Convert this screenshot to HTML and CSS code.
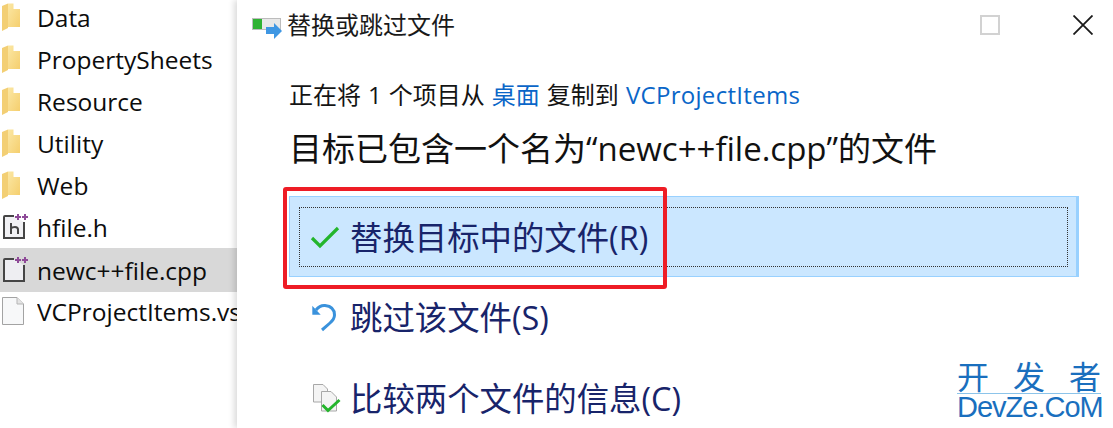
FILE: index.html
```html
<!DOCTYPE html>
<html lang="zh-CN">
<head>
<meta charset="utf-8">
<title>替换或跳过文件</title>
<link rel="stylesheet" href="styles.css">
</head>
<body>
<div class="screen">
  <aside class="files">
    <div class="file"><svg class="ico" viewBox="0 0 30 28"><use href="#folder"/></svg><span>Data</span></div>
    <div class="file"><svg class="ico" viewBox="0 0 30 28"><use href="#folder"/></svg><span>PropertySheets</span></div>
    <div class="file"><svg class="ico" viewBox="0 0 30 28"><use href="#folder"/></svg><span>Resource</span></div>
    <div class="file"><svg class="ico" viewBox="0 0 30 28"><use href="#folder"/></svg><span>Utility</span></div>
    <div class="file"><svg class="ico" viewBox="0 0 30 28"><use href="#folder"/></svg><span>Web</span></div>
    <div class="file"><svg class="ico" viewBox="0 0 30 28">
      <path d="M12 3H3Q2 3 2 4V25H22V9" fill="#f1f1f4" stroke="#454545" stroke-width="2"/>
      <path d="M9 10V21M9 15.500Q10 14 13 14Q16 14 16 16.500V21" fill="none" stroke="#454545" stroke-width="2"/>
      <path d="M13 4H19M16 1V7M20 4H26M23 1V7" stroke="#8e4a98" stroke-width="2"/>
    </svg><span>hfile.h</span></div>
    <div class="file selected"><svg class="ico" viewBox="0 0 30 28">
      <path d="M12 3H3Q2 3 2 4V25H22V9" fill="#eeeef2" stroke="#454545" stroke-width="2"/>
      <path d="M13 4H19M16 1V7M20 4H26M23 1V7" stroke="#8e4a98" stroke-width="2"/>
    </svg><span>newc++file.cpp</span></div>
    <div class="file"><svg class="ico" viewBox="0 0 30 28">
      <path d="M0.500 0.500H15L21.500 7V27.500H0.500Z" fill="#f7f8f9" stroke="#a3a3a3"/>
      <path d="M15 0.500V7H21.500" fill="#e4e4e4" stroke="#b5b5b5"/>
    </svg><span class="clip">VCProjectItems.vs</span></div>
  </aside>

  <main class="dialog">
    <header class="titlebar">
      <svg class="app-ico" viewBox="0 0 32 22">
        <rect x="0.500" y="0.500" width="28" height="11" fill="#e8e8e8" stroke="#bcbcbc"/>
        <rect x="1" y="1" width="9" height="10" fill="#2fb233"/>
        <path d="M14 9H22V5L30 13L22 21V16H14Z" fill="#3f97e3"/>
      </svg>
      <h1 class="title">替换或跳过文件</h1>
      <div class="winctl">
        <span class="maxbtn"></span>
        <svg class="closebtn" viewBox="0 0 20 20"><path d="M0.500 0.500L19.500 19.500M19.500 0.500L0.500 19.500" stroke="#1a1a1a" stroke-width="1.800"/></svg>
      </div>
    </header>

    <p class="status">正在将 1 个项目从 <a>桌面</a> 复制到 <a class="wide">VCProjectItems</a></p>
    <h2 class="heading">目标已包含一个名为“newc++file.cpp”的文件</h2>

    <div class="option active">
      <div class="focus">
        <svg class="opt-ico" viewBox="0 0 30 24"><path d="M2 13L10 21L28 3" fill="none" stroke="#24b52c" stroke-width="3.200"/></svg>
        <span class="opt-text">替换目标中的文件(R)</span>
      </div>
    </div>
    <div class="option">
      <div class="plain">
        <svg class="opt-ico" viewBox="0 0 30 30"><path d="M6 7Q10 2 15 2.500Q24.500 3.500 24.500 12Q24.500 16 20 20L12 27" fill="none" stroke="#3a92dc" stroke-width="3"/><path d="M2.300 2.700V11.700H10.700Z" fill="#3a92dc"/></svg>
        <span class="opt-text">跳过该文件(S)</span>
      </div>
    </div>
    <div class="option">
      <div class="plain">
        <svg class="opt-ico" viewBox="0 0 30 30">
          <path d="M3.500 0.500H13L17.500 5V18H3.500Z" fill="#f4f4f4" stroke="#a8a8a8"/>
          <path d="M11.500 7.500H21L26.500 13V27H11.500Z" fill="#f4f4f4" stroke="#a8a8a8"/>
          <path d="M12.500 21L18 26.500L29.500 16" fill="none" stroke="#24b52c" stroke-width="3"/>
        </svg>
        <span class="opt-text">比较两个文件的信息(C)</span>
      </div>
    </div>
  </main>

  <div class="redbox"></div>
  <div class="mark">
    <div class="mark-top"><span>开</span><span>发</span><span>者</span></div>
    <div class="mark-bottom">DevZe.CoM</div>
  </div>
</div>

<svg class="defs" aria-hidden="true"><defs>
  <linearGradient id="fg" x1="0" y1="0" x2="1" y2="1"><stop offset="0" stop-color="#fbe7a4"/><stop offset="1" stop-color="#f5cf6e"/></linearGradient>
  <symbol id="folder" viewBox="0 0 30 28">
    <path d="M0 3L6 0.500V25L0 28Z" fill="#f3cf74"/>
    <path d="M6 0.500H11.500V6H18V24H6Z" fill="url(#fg)"/>
  </symbol>
</defs></svg>
</body>
</html>
```
FILE: styles.css
```css
* { box-sizing: border-box; }
html, body { margin: 0; height: 100%; overflow: hidden; background: #fff; }
body { font-family: "Open Sans", "Noto Sans CJK SC", sans-serif; color: #111; }
.defs { width: 0; height: 0; position: absolute; }

.screen { position: relative; display: flex; width: 1113px; height: 428px; overflow: hidden; }

.files { flex: 0 0 237px; width: 237px; margin-top: -4px; overflow: hidden; }
.file { display: flex; align-items: center; height: 42px; padding-left: 2px; font-size: 24.500px; white-space: nowrap; color: #0c0c0c; }
.file.selected { height: 44px; margin-bottom: -2px; background: #d8d8d8; }
.ico { flex: none; width: 30px; height: 28px; margin-right: 5px; }
.clip { overflow: hidden; }

.dialog { position: relative; flex: 1; display: flex; flex-direction: column; padding-left: 52px; background: #fff; box-shadow: -3px 0 6px rgba(0, 0, 0, 0.14); }
.dialog > * { flex: none; }

.titlebar { display: flex; align-items: center; height: 50px; margin-left: -37px; }
.app-ico { flex: none; width: 32px; height: 22px; margin-right: 3px; margin-top: 7px; }
.title { margin: 0; font-size: 24px; font-weight: 400; line-height: 1; color: #1a1a1a; }
.winctl { display: flex; align-items: center; margin-left: auto; padding-right: 20px; }
.maxbtn { width: 20px; height: 20px; margin-right: 73px; border: 2px solid #d2d2d2; }
.closebtn { width: 20px; height: 20px; }

.status { margin: 20px 0 0; height: 50px; font-size: 24px; line-height: 50px; word-spacing: 0.800px; color: #141414; white-space: nowrap; }
.status a { color: #0a66c8; }
.status .wide { letter-spacing: 0.300px; }
.heading { margin: 7px 0 25px; font-size: 33px; font-weight: 400; line-height: 44px; color: #111; white-space: nowrap; }

.option { width: 790px; height: 81px; font-size: 32.400px; color: #18246a; }
.option.active { background: #cbe7ff; border: 1px solid #99d1ff; border-right-width: 3px; padding: 10px 8px 9px 9px; }
.focus, .plain { display: flex; align-items: center; height: 100%; padding-left: 10px; white-space: nowrap; }
.focus { border: 1px dotted #333; }
.plain { padding-left: 21px; }
.opt-ico { flex: none; width: 30px; height: 30px; margin-right: 10px; overflow: visible; }
.opt-text { margin-bottom: 4px; }

.redbox { position: absolute; left: 283px; top: 187px; width: 384px; height: 102px; border: 4px solid #ee1c25; border-radius: 3px; }

.mark { position: absolute; left: 957px; top: 355px; width: 144px; color: #1a6fbe; }
.mark-top { display: flex; justify-content: space-between; padding-top: 5px; font-size: 32px; line-height: 33px; border-bottom: 1px solid #8cc4ea; }
.mark-bottom { font-size: 29px; line-height: 26px; letter-spacing: -1px; white-space: nowrap; font-family: "Liberation Sans", sans-serif; }
```
